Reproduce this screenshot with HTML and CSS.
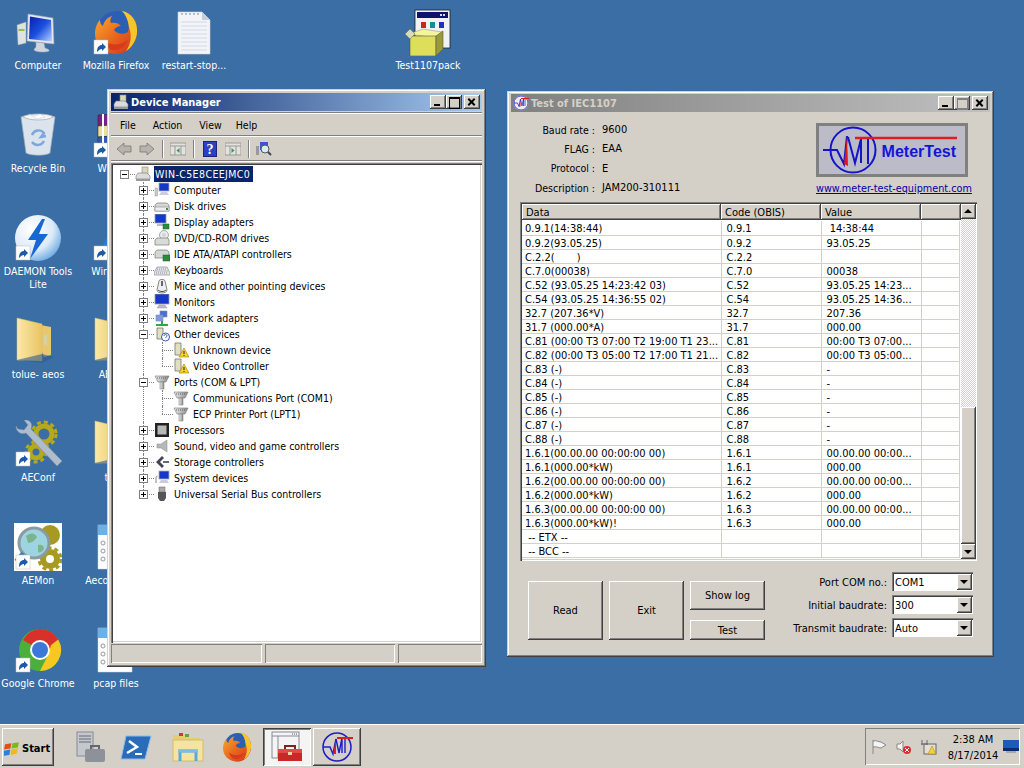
FILE: index.html
```html
<!DOCTYPE html>
<html lang="en">
<head>
    <meta charset="UTF-8">
    <title>Desktop</title>
    <link rel="stylesheet" href="styles.css">
</head>
<body>
    <!-- shared icon drawings -->
    <svg class="icon-defs" xmlns="http://www.w3.org/2000/svg">
        <defs>
            <linearGradient id="g-screen" x1="0" y1="0" x2="1" y2="1"><stop offset="0" stop-color="#0a1fa8"/><stop offset=".5" stop-color="#1a4fe0"/><stop offset="1" stop-color="#bcd4ff"/></linearGradient>
            <linearGradient id="g-fox" x1="0" y1="0" x2="1" y2="1"><stop offset="0" stop-color="#f9b233"/><stop offset=".55" stop-color="#e8641b"/><stop offset="1" stop-color="#c9301e"/></linearGradient>
            <linearGradient id="g-folder" x1="0" y1="0" x2="1" y2="0"><stop offset="0" stop-color="#fbe9a8"/><stop offset="1" stop-color="#e9c463"/></linearGradient>
            <radialGradient id="g-sphere" cx=".35" cy=".3" r=".8"><stop offset="0" stop-color="#fff"/><stop offset=".6" stop-color="#dceaf8"/><stop offset="1" stop-color="#5aa0dd"/></radialGradient>
            <linearGradient id="g-port" x1="0" y1="0" x2="1" y2="0"><stop offset="0" stop-color="#eee"/><stop offset="1" stop-color="#888"/></linearGradient>

            <g id="i-shortcut">
                <rect x="2" y="32" width="14" height="14" fill="#fff" stroke="#bbb" stroke-width=".5"/>
                <path d="M5 44c0-5 2-7 5-7v-2l4 4-4 4v-2c-2 0-3 1-5 3z" fill="#1c5aa8"/>
            </g>
            <g id="i-computer">
                <path d="M14 6l25 4 1 26-27-3z" fill="#e4e8ee" stroke="#9aa3ad" stroke-width=".6"/>
                <path d="M16 8.500l21 3.500 1 21.500-23-2.500z" fill="url(#g-screen)"/>
                <path d="M22 34l8 1 1 5c3 1 5 2 4 3-3 2-14 1-15-1 0-1 1-2 2-3z" fill="#cfd5dc" stroke="#9aa3ad" stroke-width=".5"/>
                <path d="M3 17l9-3v21l-8 2z" fill="#dfe3e0" stroke="#9aa3ad" stroke-width=".5"/>
                <rect x="4.500" y="21" width="6" height="2" fill="#8fc24f"/>
            </g>
            <g id="i-firefox">
                <circle cx="25" cy="23" r="20" fill="#2a5fb4"/>
                <path d="M30 3c10 2 16 11 15 22-1 12-10 21-21 21C12 46 3 37 3 26c0-6 2-11 5-14 0 3 1 5 3 6 1-5 5-9 9-10-2 3-2 5-1 7 4-1 8 0 10 3-3 0-6 2-7 4 3 4 9 5 14 2 2-7 0-15-6-21z" fill="url(#g-fox)"/>
                <path d="M30 3c10 2 16 11 15 22-1 8-5 14-11 18 5-7 6-16 3-24-1-7-3-12-7-16z" fill="#f7c42d"/>
                <path d="M12 32c6 6 16 6 24 0-3 7-9 11-16 10-4-1-7-5-8-10z" fill="#d83a1c"/>
            </g>
            <g id="i-doc">
                <path d="M8 4h24l8 8v34H8z" fill="#f2f4f8" stroke="#cfd4dc" stroke-width=".6"/>
                <path d="M32 4v8h8z" fill="#c8ced8"/>
                <path d="M11 14h26M11 18h26M11 22h26M11 26h26M11 30h26M11 34h26M11 38h26M11 42h26" stroke="#d2d8e4" stroke-width="1"/>
                <path d="M11 6h18" stroke="#a5adb8" stroke-width="1.500" stroke-dasharray="2 2"/>
            </g>
            <g id="i-package">
                <rect x="11" y="2" width="35" height="38" fill="#f2f2f4" stroke="#222" stroke-width=".8"/>
                <rect x="13" y="4" width="31" height="6" fill="#101070"/>
                <path d="M36 7h6" stroke="#ddd" stroke-width="2" stroke-dasharray="2 1"/>
                <rect x="17" y="14" width="5" height="6" fill="#d02020"/>
                <rect x="26" y="14" width="5" height="6" fill="#109090"/>
                <rect x="35" y="14" width="5" height="6" fill="#2030c0"/>
                <path d="M5 26l14-5 19 3-6 6z" fill="#f4f49a" stroke="#888" stroke-width=".5"/>
                <path d="M6 28h26v20H6z" fill="#dede5a" stroke="#555" stroke-width=".6"/>
                <path d="M32 28l7-5v18l-7 7z" fill="#9a9a38" stroke="#555" stroke-width=".6"/>
                <path d="M1 26l5-5 5 5-5 5z" fill="#d8dcb0" stroke="#666" stroke-width=".5"/>
            </g>
            <g id="i-recycle">
                <path d="M7 6c6-3 29-3 34 0l-5 36c-4 3-19 3-24 0z" fill="#dbe4ec" stroke="#9aa7b3" stroke-width=".7"/>
                <path d="M9 6c7 4 24 4 30 0-3-4-27-4-30 0z" fill="#f4f6f8" stroke="#a6b0ba" stroke-width=".8"/>
                <path d="M15 3l6 2 5-2 5 3-8 2z" fill="#fff" stroke="#b6bcc4" stroke-width=".4"/>
                <path d="M18 24a7 7 0 0 1 12-2l-3 4 5-1M30 30a7 7 0 0 1-12 1" fill="none" stroke="#7ca6dc" stroke-width="2.400"/>
            </g>
            <g id="i-winrar">
                <path d="M6 4l28-2v11l-28 2z" fill="#7a1f86" stroke="#222" stroke-width=".5"/>
                <path d="M6 15l28-2v11l-28 2z" fill="#e8dfa0" stroke="#222" stroke-width=".5"/>
                <path d="M6 26l28-2v10l-28 3z" fill="#3558b8" stroke="#222" stroke-width=".5"/>
                <path d="M11 3v33" stroke="#fff" stroke-width="2"/>
            </g>
            <g id="i-daemon">
                <circle cx="24" cy="24" r="23" fill="url(#g-sphere)"/>
                <path d="M28 5L14 26h8l-6 19 18-25h-9l6-15z" fill="#1668d2"/>
            </g>
            <g id="i-winblue">
                <path d="M8 46C10 24 24 6 38 2l6 4C30 12 20 28 18 46z" fill="#2a7ae0"/>
                <path d="M20 46c2-12 8-22 18-28l8 4c-8 6-14 14-16 24z" fill="#0f4fb0"/>
            </g>
            <g id="i-folder" transform="translate(-4 0)">
                <path d="M20 6l21 4v28l-7 2z" fill="#e6c871"/>
                <path d="M7 1l25 6v37L7 43z" fill="url(#g-folder)" stroke="#d8bc6c" stroke-width=".5"/>
                <path d="M7 43l25-6 12 3-12 6z" fill="#2e5c8e" opacity=".6"/>
                <rect x="34" y="18" width="3" height="10" rx="1" fill="#d8d0a8"/>
            </g>
            <g id="i-aeconf">
                <circle cx="30" cy="14" r="8" fill="none" stroke="#b8a81c" stroke-width="5"/>
                <circle cx="30" cy="14" r="12" fill="none" stroke="#b8a81c" stroke-width="3" stroke-dasharray="4 3"/>
                <circle cx="22" cy="32" r="6" fill="none" stroke="#b8a81c" stroke-width="5"/>
                <circle cx="22" cy="32" r="10" fill="none" stroke="#b8a81c" stroke-width="3" stroke-dasharray="4 3"/>
                <path d="M2 6c0 6 5 9 10 7l31 33 5-5-31-32c2-5-1-10-7-9l4 5-4 5-6-1z" fill="#aebccc" stroke="#7e90a4" stroke-width=".5"/>
            </g>
            <g id="i-aemon">
                <rect x="0" y="0" width="48" height="48" fill="#fff"/>
                <circle cx="36" cy="12" r="10" fill="#a89a20"/>
                <circle cx="36" cy="36" r="7" fill="none" stroke="#a89a20" stroke-width="6"/>
                <circle cx="36" cy="36" r="11" fill="none" stroke="#a89a20" stroke-width="3" stroke-dasharray="4 3"/>
                <circle cx="20" cy="20" r="15" fill="#9cd4e0" stroke="#8a9aa0" stroke-width="3"/>
                <path d="M12 13c5-4 9-3 11 1-2 3-5 6-9 6zM24 22c4-1 6 1 6 4-2 3-4 4-6 3z" fill="#7cb48c"/>
                <path d="M9 30L2 38" stroke="#3b7cc0" stroke-width="4"/>
            </g>
            <g id="i-doclist">
                <path d="M6 2h34v44H6z" fill="#fdfdfd" stroke="#d0d4d8" stroke-width=".5"/>
                <rect x="6" y="2" width="34" height="10" fill="#6cb0e8"/>
                <circle cx="11" cy="20" r="2" fill="none" stroke="#999"/>
                <circle cx="11" cy="28" r="2" fill="none" stroke="#999"/>
                <circle cx="11" cy="36" r="2" fill="none" stroke="#999"/>
            </g>
            <g id="i-chrome">
                <circle cx="26" cy="24" r="21" fill="#4caf3c"/>
                <path d="M26 3a21 21 0 0 1 18.200 10.500L44 24H26L9 14A21 21 0 0 1 26 3z" fill="#d8312a"/>
                <path d="M44.200 13.500A21 21 0 0 1 26 45l9-18 2-8z" fill="#f7c821"/>
                <circle cx="26" cy="24" r="10" fill="#fff"/>
                <circle cx="26" cy="24" r="8" fill="#3b78d8"/>
            </g>

            <g id="i-mt">
                <circle cx="16" cy="16" r="14" fill="none" stroke="#1c1cc8" stroke-width="1.500"/>
                <path d="M2 16h7l3 7 3-15" fill="none" stroke="#1c1cc8" stroke-width="1.500"/>
                <path d="M12 23l3-15v15" fill="#d82020"/>
                <path d="M15 8l3 14 3-15v15M24 8v14" fill="none" stroke="#1c1cc8" stroke-width="1.400"/>
                <path d="M16 7h16" stroke="#d82020" stroke-width="2"/>
            </g>

            <!-- tree, 16px -->
            <g id="t-host">
                <rect x="7" y="1" width="6" height="8" fill="#d8d8b8" stroke="#888" stroke-width=".6"/>
                <path d="M3 7l9 0 3 3v3H1v-3z" fill="#dcdcdc" stroke="#777" stroke-width=".6"/>
                <rect x="1" y="13" width="14" height="2" fill="#999"/>
            </g>
            <g id="t-computer">
                <rect x="5" y="1" width="10" height="8" fill="#1638c8" stroke="#aab" stroke-width=".8"/>
                <path d="M7 10h6l2 3H5z" fill="#ccd"/>
                <rect x="1" y="6" width="2.500" height="8" fill="#ccc" stroke="#888" stroke-width=".4"/>
            </g>
            <g id="t-disk">
                <path d="M1 8c0-2 2-3 3-3h8c1 0 3 1 3 3v5H1z" fill="#d4d8d4" stroke="#666" stroke-width=".6"/>
                <rect x="1" y="9" width="14" height="4" fill="#eef0ee" stroke="#777" stroke-width=".5"/>
                <rect x="12" y="10" width="2" height="2" fill="#2c9c3c"/>
            </g>
            <g id="t-display">
                <rect x="1" y="0" width="11" height="9" fill="#1638c8" stroke="#99a" stroke-width=".8"/>
                <path d="M3 10h7v2H3z" fill="#bbc"/>
                <rect x="9" y="10" width="6" height="5" fill="#2c8c3c" stroke="#1c5c2c" stroke-width=".5"/>
            </g>
            <g id="t-dvd">
                <circle cx="10" cy="5" r="4.500" fill="#e8ecf0" stroke="#777" stroke-width=".6"/>
                <circle cx="10" cy="5" r="1.200" fill="#fff" stroke="#777" stroke-width=".4"/>
                <path d="M1 10l2-2h11l1 2v5H1z" fill="#d8dcd8" stroke="#666" stroke-width=".6"/>
            </g>
            <g id="t-ide">
                <path d="M1 7c0-2 2-3 3-3h8c1 0 3 1 3 3v5H1z" fill="#d4d8d4" stroke="#666" stroke-width=".6"/>
                <rect x="9" y="9" width="7" height="6" fill="#2c8c3c" stroke="#1c5c2c" stroke-width=".5"/>
            </g>
            <g id="t-keyboard">
                <path d="M3 5h10l3 6v2H0v-2z" fill="#e4e6ea" stroke="#778" stroke-width=".6"/>
                <path d="M3 7h10M2.500 9h11M2 11h12" stroke="#889" stroke-dasharray="1 1"/>
            </g>
            <g id="t-mouse">
                <path d="M5 3c0-2 6-2 6 0l2 9c0 4-10 4-10 0z" fill="#eceef0" stroke="#555" stroke-width=".7"/>
                <path d="M7 3h2v5H7z" fill="#667"/>
                <path d="M4 12c2 2 6 2 8 0" fill="none" stroke="#445"/>
            </g>
            <g id="t-monitor">
                <rect x="1" y="0" width="14" height="10" fill="#1638c8" stroke="#99a" stroke-width=".8"/>
                <path d="M5 11h6l2 3H3z" fill="#bbc" stroke="#889" stroke-width=".4"/>
            </g>
            <g id="t-network">
                <rect x="6" y="1" width="7" height="6" fill="#4c6cd8" stroke="#88a" stroke-width=".6"/>
                <rect x="2" y="5" width="7" height="6" fill="#7c9ce0" stroke="#88a" stroke-width=".6"/>
                <path d="M8 11v3M2 15h12" stroke="#2ca84c" stroke-width="2"/>
            </g>
            <g id="t-other">
                <path d="M3 2h6v11H3z" fill="#e0e0c0" stroke="#666" stroke-width=".7"/>
                <circle cx="11.500" cy="11" r="4" fill="#fff" stroke="#3858a8"/>
                <path d="M10 10c0-2 3-2 3 0 0 1-1.500 1-1.500 2" fill="none" stroke="#3858a8"/>
            </g>
            <g id="t-warn">
                <path d="M2 1h6v12H2z" fill="#e0e0c0" stroke="#666" stroke-width=".7"/>
                <path d="M11 6l5 9H6z" fill="#f8d030" stroke="#a08010" stroke-width=".6"/>
                <path d="M11 9v3M11 13v1" stroke="#222"/>
            </g>
            <g id="t-port">
                <path d="M1 2h14l-3 6H4z" fill="url(#g-port)" stroke="#777" stroke-width=".6"/>
                <rect x="6" y="8" width="4" height="7" fill="url(#g-port)" stroke="#777" stroke-width=".5"/>
                <path d="M3 4h10" stroke="#666" stroke-dasharray="1 1"/>
            </g>
            <g id="t-cpu">
                <rect x="1" y="1" width="14" height="14" fill="#222"/>
                <rect x="3.500" y="3.500" width="9" height="9" fill="#b8b8b4"/>
            </g>
            <g id="t-sound">
                <path d="M3 6h4l6-4v12l-6-4H3z" fill="#b4b8b8" stroke="#888" stroke-width=".5"/>
            </g>
            <g id="t-storage">
                <path d="M8 2l-6 6 6 6 2-2-4-4 4-4z" fill="#445"/>
                <path d="M9 7h6v2H9z" fill="#667"/>
            </g>
            <g id="t-system">
                <rect x="5" y="1" width="10" height="8" fill="#1638c8" stroke="#aab" stroke-width=".8"/>
                <path d="M7 10h6l2 3H5z" fill="#ccd"/>
                <path d="M2 13V7l1.500-1" fill="none" stroke="#888"/>
            </g>
            <g id="t-usb">
                <rect x="5" y="1" width="6" height="5" fill="#aaa" stroke="#666" stroke-width=".5"/>
                <path d="M4 6h8v6l-2 3H6l-2-3z" fill="#555"/>
            </g>
        </defs>
    </svg>

    <div class="desktop">
        <div class="icon-grid">
            <div class="desk-icon"><svg viewBox="0 0 48 48"><use href="#i-computer"/></svg><span>Computer</span></div>
            <div class="desk-icon"><svg viewBox="0 0 48 48"><use href="#i-recycle"/></svg><span>Recycle Bin</span></div>
            <div class="desk-icon"><svg viewBox="0 0 48 48"><use href="#i-daemon"/><use href="#i-shortcut"/></svg><span>DAEMON Tools Lite</span></div>
            <div class="desk-icon"><svg viewBox="0 0 48 48"><use href="#i-folder"/></svg><span>tolue- aeos</span></div>
            <div class="desk-icon"><svg viewBox="0 0 48 48"><use href="#i-aeconf"/><use href="#i-shortcut"/></svg><span>AEConf</span></div>
            <div class="desk-icon"><svg viewBox="0 0 48 48"><use href="#i-aemon"/><use href="#i-shortcut"/></svg><span>AEMon</span></div>
            <div class="desk-icon"><svg viewBox="0 0 48 48"><use href="#i-chrome"/><use href="#i-shortcut"/></svg><span>Google Chrome</span></div>

            <div class="desk-icon"><svg viewBox="0 0 48 48"><use href="#i-firefox"/><use href="#i-shortcut"/></svg><span>Mozilla Firefox</span></div>
            <div class="desk-icon"><svg viewBox="0 0 48 48"><use href="#i-winrar"/><use href="#i-shortcut"/></svg><span>WinRAR</span></div>
            <div class="desk-icon"><svg viewBox="0 0 48 48"><use href="#i-winblue"/><use href="#i-shortcut"/></svg><span>WinPcap 4</span></div>
            <div class="desk-icon"><svg viewBox="0 0 48 48"><use href="#i-folder"/></svg><span>AE files</span></div>
            <div class="desk-icon"><svg viewBox="0 0 48 48"><use href="#i-folder"/></svg><span>tests</span></div>
            <div class="desk-icon"><svg viewBox="0 0 48 48"><use href="#i-doclist"/></svg><span>Aecon-config</span></div>
            <div class="desk-icon"><svg viewBox="0 0 48 48"><use href="#i-doclist"/></svg><span>pcap files</span></div>

            <div class="desk-icon"><svg viewBox="0 0 48 48"><use href="#i-doc"/></svg><span>restart-stop...</span></div>
            <div class="desk-icon pack"><svg viewBox="0 0 48 48"><use href="#i-package"/></svg><span>Test1107pack</span></div>
        </div>

        <!-- Device Manager -->
        <div class="window device-manager">
            <div class="title-bar active">
                <svg class="title-icon" viewBox="0 0 16 16"><use href="#t-host"/></svg>
                <span class="title-text">Device Manager</span>
                <div class="caption-btns">
                    <button class="caption-btn cap-min"></button>
                    <button class="caption-btn cap-max"></button>
                    <button class="caption-btn cap-close"></button>
                </div>
            </div>
            <div class="menu-bar"><span>File</span><span>Action</span><span>View</span><span class="menu-help">Help</span></div>
            <div class="tool-bar">
                <svg class="tool back" viewBox="0 0 16 16"><path d="M1 8l7-6v3h7v6H8v3z" fill="#b8b4ac" stroke="#777" stroke-width=".8"/></svg>
                <svg class="tool fwd" viewBox="0 0 16 16"><path d="M15 8L8 2v3H1v6h7v3z" fill="#b8b4ac" stroke="#777" stroke-width=".8"/></svg>
                <i class="tool-sep"></i>
                <svg class="tool panel" viewBox="0 0 16 16"><rect x="0" y="2" width="16" height="12" fill="#e4e2dc" stroke="#999"/><path d="M0 5h16M5 5v9M11 5v9" stroke="#999"/><path d="M9.500 7v5l-3-2.500z" fill="#2c9c5c"/></svg>
                <i class="tool-sep"></i>
                <svg class="tool help" viewBox="0 0 14 16"><rect x=".5" y=".5" width="13" height="15" fill="#2c40c0" stroke="#182878"/><text x="7" y="13" text-anchor="middle" class="help-mark">?</text></svg>
                <svg class="tool panel2" viewBox="0 0 16 16"><rect x="0" y="2" width="16" height="12" fill="#e4e2dc" stroke="#999"/><path d="M0 5h16M5 5v9M11 5v9" stroke="#999"/><path d="M6.500 7v5l3-2.500z" fill="#2c9c5c"/></svg>
                <i class="tool-sep"></i>
                <svg class="tool scan" viewBox="0 0 16 16"><rect x="0" y="5" width="3" height="9" fill="#999"/><rect x="4" y="1" width="8" height="8" fill="#3858c8"/><circle cx="9" cy="8" r="4" fill="#dce8f4" stroke="#555"/><path d="M12 11l3 3" stroke="#445" stroke-width="2"/></svg>
            </div>
            <div class="tree-view">
                <ul class="tree">
                    <li class="node root">
                        <div class="row"><i class="exp minus"></i><svg class="tree-icon" viewBox="0 0 16 16"><use href="#t-host"/></svg><span class="label selected">WIN-C5E8CEEJMC0</span></div>
                        <ul class="branch">
                            <li class="node"><div class="row"><i class="exp plus"></i><svg class="tree-icon" viewBox="0 0 16 16"><use href="#t-computer"/></svg><span class="label">Computer</span></div></li>
                            <li class="node"><div class="row"><i class="exp plus"></i><svg class="tree-icon" viewBox="0 0 16 16"><use href="#t-disk"/></svg><span class="label">Disk drives</span></div></li>
                            <li class="node"><div class="row"><i class="exp plus"></i><svg class="tree-icon" viewBox="0 0 16 16"><use href="#t-display"/></svg><span class="label">Display adapters</span></div></li>
                            <li class="node"><div class="row"><i class="exp plus"></i><svg class="tree-icon" viewBox="0 0 16 16"><use href="#t-dvd"/></svg><span class="label">DVD/CD-ROM drives</span></div></li>
                            <li class="node"><div class="row"><i class="exp plus"></i><svg class="tree-icon" viewBox="0 0 16 16"><use href="#t-ide"/></svg><span class="label">IDE ATA/ATAPI controllers</span></div></li>
                            <li class="node"><div class="row"><i class="exp plus"></i><svg class="tree-icon" viewBox="0 0 16 16"><use href="#t-keyboard"/></svg><span class="label">Keyboards</span></div></li>
                            <li class="node"><div class="row"><i class="exp plus"></i><svg class="tree-icon" viewBox="0 0 16 16"><use href="#t-mouse"/></svg><span class="label">Mice and other pointing devices</span></div></li>
                            <li class="node"><div class="row"><i class="exp plus"></i><svg class="tree-icon" viewBox="0 0 16 16"><use href="#t-monitor"/></svg><span class="label">Monitors</span></div></li>
                            <li class="node"><div class="row"><i class="exp plus"></i><svg class="tree-icon" viewBox="0 0 16 16"><use href="#t-network"/></svg><span class="label">Network adapters</span></div></li>
                            <li class="node">
                                <div class="row"><i class="exp minus"></i><svg class="tree-icon" viewBox="0 0 16 16"><use href="#t-other"/></svg><span class="label">Other devices</span></div>
                                <ul class="branch">
                                    <li class="node"><div class="row"><i class="exp none"></i><svg class="tree-icon" viewBox="0 0 16 16"><use href="#t-warn"/></svg><span class="label">Unknown device</span></div></li>
                                    <li class="node"><div class="row"><i class="exp none"></i><svg class="tree-icon" viewBox="0 0 16 16"><use href="#t-warn"/></svg><span class="label">Video Controller</span></div></li>
                                </ul>
                            </li>
                            <li class="node">
                                <div class="row"><i class="exp minus"></i><svg class="tree-icon" viewBox="0 0 16 16"><use href="#t-port"/></svg><span class="label">Ports (COM &amp; LPT)</span></div>
                                <ul class="branch">
                                    <li class="node"><div class="row"><i class="exp none"></i><svg class="tree-icon" viewBox="0 0 16 16"><use href="#t-port"/></svg><span class="label">Communications Port (COM1)</span></div></li>
                                    <li class="node"><div class="row"><i class="exp none"></i><svg class="tree-icon" viewBox="0 0 16 16"><use href="#t-port"/></svg><span class="label">ECP Printer Port (LPT1)</span></div></li>
                                </ul>
                            </li>
                            <li class="node"><div class="row"><i class="exp plus"></i><svg class="tree-icon" viewBox="0 0 16 16"><use href="#t-cpu"/></svg><span class="label">Processors</span></div></li>
                            <li class="node"><div class="row"><i class="exp plus"></i><svg class="tree-icon" viewBox="0 0 16 16"><use href="#t-sound"/></svg><span class="label">Sound, video and game controllers</span></div></li>
                            <li class="node"><div class="row"><i class="exp plus"></i><svg class="tree-icon" viewBox="0 0 16 16"><use href="#t-storage"/></svg><span class="label">Storage controllers</span></div></li>
                            <li class="node"><div class="row"><i class="exp plus"></i><svg class="tree-icon" viewBox="0 0 16 16"><use href="#t-system"/></svg><span class="label">System devices</span></div></li>
                            <li class="node"><div class="row"><i class="exp plus"></i><svg class="tree-icon" viewBox="0 0 16 16"><use href="#t-usb"/></svg><span class="label">Universal Serial Bus controllers</span></div></li>
                        </ul>
                    </li>
                </ul>
            </div>
            <div class="status-bar"><i class="pane pane-a"></i><i class="pane pane-b"></i><i class="pane pane-c"></i></div>
        </div>

        <!-- Test of IEC1107 -->
        <div class="window iec-test">
            <div class="title-bar inactive">
                <svg class="title-icon" viewBox="0 0 32 32"><circle cx="16" cy="16" r="15" fill="#eee"/><use href="#i-mt"/></svg>
                <span class="title-text">Test of IEC1107</span>
                <div class="caption-btns">
                    <button class="caption-btn cap-min"></button>
                    <button class="caption-btn cap-max off"></button>
                    <button class="caption-btn cap-close"></button>
                </div>
            </div>
            <div class="iec-body">
                <div class="iec-head">
                    <dl class="meter-info">
                        <dt>Baud rate :</dt><dd>9600</dd>
                        <dt>FLAG :</dt><dd>EAA</dd>
                        <dt>Protocol :</dt><dd>E</dd>
                        <dt>Description :</dt><dd>JAM200-310111</dd>
                    </dl>
                    <div class="brand">
                        <div class="logo">
                            <svg viewBox="0 0 146 48" class="logo-art">
                                <circle cx="34" cy="24" r="22.500" fill="none" stroke="#1414c8" stroke-width="2"/>
                                <path d="M4 24h14l7 14 3-28" fill="none" stroke="#1414c8" stroke-width="2"/>
                                <path d="M25 38l3-28 1 30z" fill="#d81c1c"/>
                                <path d="M29 11l7 26 6-24v24M49 13v25" fill="none" stroke="#1414c8" stroke-width="2"/>
                                <path d="M36 12h102" stroke="#e01c1c" stroke-width="2.500"/>
                            </svg>
                            <span class="logo-text">MeterTest</span>
                        </div>
                        <a class="site-link">www.meter-test-equipment.com</a>
                    </div>
                </div>

                <div class="data-frame">
                    <div class="data-view">
                        <div class="data-header"><span class="col-data">Data</span><span class="col-code">Code (OBIS)</span><span class="col-value">Value</span><span class="col-rest"></span></div>
                        <table class="data-table">
                            <tr><td>0.9.1(14:38:44)</td><td>0.9.1</td><td>&nbsp;14:38:44</td><td></td></tr>
                            <tr><td>0.9.2(93.05.25)</td><td>0.9.2</td><td>93.05.25</td><td></td></tr>
                            <tr><td>C.2.2(&nbsp;&nbsp;&nbsp;&nbsp;&nbsp;&nbsp;&nbsp;)</td><td>C.2.2</td><td></td><td></td></tr>
                            <tr><td>C.7.0(00038)</td><td>C.7.0</td><td>00038</td><td></td></tr>
                            <tr><td>C.52 (93.05.25 14:23:42 03)</td><td>C.52</td><td>93.05.25 14:23...</td><td></td></tr>
                            <tr><td>C.54 (93.05.25 14:36:55 02)</td><td>C.54</td><td>93.05.25 14:36...</td><td></td></tr>
                            <tr><td>32.7 (207.36*V)</td><td>32.7</td><td>207.36</td><td></td></tr>
                            <tr><td>31.7 (000.00*A)</td><td>31.7</td><td>000.00</td><td></td></tr>
                            <tr><td>C.81 (00:00 T3 07:00 T2 19:00 T1 23...</td><td>C.81</td><td>00:00 T3 07:00...</td><td></td></tr>
                            <tr><td>C.82 (00:00 T3 05:00 T2 17:00 T1 21...</td><td>C.82</td><td>00:00 T3 05:00...</td><td></td></tr>
                            <tr><td>C.83 (-)</td><td>C.83</td><td>-</td><td></td></tr>
                            <tr><td>C.84 (-)</td><td>C.84</td><td>-</td><td></td></tr>
                            <tr><td>C.85 (-)</td><td>C.85</td><td>-</td><td></td></tr>
                            <tr><td>C.86 (-)</td><td>C.86</td><td>-</td><td></td></tr>
                            <tr><td>C.87 (-)</td><td>C.87</td><td>-</td><td></td></tr>
                            <tr><td>C.88 (-)</td><td>C.88</td><td>-</td><td></td></tr>
                            <tr><td>1.6.1(00.00.00 00:00:00 00)</td><td>1.6.1</td><td>00.00.00 00:00...</td><td></td></tr>
                            <tr><td>1.6.1(000.00*kW)</td><td>1.6.1</td><td>000.00</td><td></td></tr>
                            <tr><td>1.6.2(00.00.00 00:00:00 00)</td><td>1.6.2</td><td>00.00.00 00:00...</td><td></td></tr>
                            <tr><td>1.6.2(000.00*kW)</td><td>1.6.2</td><td>000.00</td><td></td></tr>
                            <tr><td>1.6.3(00.00.00 00:00:00 00)</td><td>1.6.3</td><td>00.00.00 00:00...</td><td></td></tr>
                            <tr><td>1.6.3(000.00*kW)!</td><td>1.6.3</td><td>000.00</td><td></td></tr>
                            <tr><td>&nbsp;-- ETX --</td><td></td><td></td><td></td></tr>
                            <tr><td>&nbsp;-- BCC --</td><td></td><td></td><td></td></tr>
                        </table>
                    </div>
                    <div class="scroll-bar">
                        <button class="scroll-btn up"></button>
                        <div class="scroll-track"></div>
                        <div class="scroll-thumb"></div>
                        <button class="scroll-btn down"></button>
                    </div>
                </div>

                <div class="controls">
                    <button class="btn btn-big">Read</button>
                    <button class="btn btn-big">Exit</button>
                    <div class="btn-stack">
                        <button class="btn btn-log">Show log</button>
                        <button class="btn btn-test">Test</button>
                    </div>
                    <div class="port-form">
                        <label>Port COM no.:</label><div class="combo"><span>COM1</span><i class="combo-arrow"></i></div>
                        <label>Initial baudrate:</label><div class="combo"><span>300</span><i class="combo-arrow"></i></div>
                        <label>Transmit baudrate:</label><div class="combo"><span>Auto</span><i class="combo-arrow"></i></div>
                    </div>
                </div>
            </div>
        </div>
    </div>

    <!-- taskbar -->
    <div class="taskbar">
        <button class="start-btn">
            <svg viewBox="0 0 16 16"><path d="M1 4l6-1-1 5-6 1z" fill="#e0501c"/><path d="M8 3l6-1-1 5-6 1z" fill="#7cb81c"/><path d="M0 10l6-1-1 5-6 1z" fill="#2c80d8"/><path d="M7 9l6-1-1 5-6 1z" fill="#f0b81c"/></svg>
            <span>Start</span>
        </button>
        <div class="quick-launch">
            <svg viewBox="0 0 32 32"><rect x="3" y="1" width="16" height="24" fill="#c4c8cc" stroke="#889"/><path d="M5 5h12M5 8h12M5 11h12" stroke="#667"/><rect x="11" y="18" width="20" height="13" rx="2" fill="#8c9298"/><path d="M17 18v-3h8v3" fill="none" stroke="#667" stroke-width="2"/></svg>
            <svg viewBox="0 0 32 32"><path d="M6 5h25l-6 23H1z" fill="#2a6cb8" stroke="#8cbce8"/><path d="M9 10l8 6-10 6" fill="none" stroke="#fff" stroke-width="2.500"/><path d="M15 23h7" stroke="#fff" stroke-width="2"/></svg>
            <svg viewBox="0 0 32 32"><path d="M1 4h12l3 3h12v6H1z" fill="#e8cc70"/><rect x="7" y="2" width="4" height="3" fill="#c83c2c"/><rect x="13" y="3" width="4" height="3" fill="#5ca83c"/><rect x="1" y="9" width="30" height="21" fill="#f4e4a4" stroke="#d4bc6c"/><path d="M8 30V20h16v10" fill="none" stroke="#5ca8dc" stroke-width="3"/><path d="M6 20h20" stroke="#7cbce8" stroke-width="3"/></svg>
            <svg viewBox="0 0 48 48"><use href="#i-firefox"/></svg>
        </div>
        <button class="task-btn pressed">
            <svg viewBox="0 0 32 32"><rect x="1" y="1" width="27" height="26" fill="#f4f4f4" stroke="#889"/><path d="M1 5h27M7 5v22" stroke="#889"/><path d="M21 3h5" stroke="#556" stroke-dasharray="1 1"/><path d="M7 18h24v12H7z" fill="#c82828"/><path d="M7 18h24v4H7z" fill="#e04c4c"/><path d="M14 18v-3h10v3" fill="none" stroke="#802020" stroke-width="2"/><rect x="17" y="21" width="4" height="3" fill="#f0d0a0"/></svg>
        </button>
        <button class="task-btn">
            <svg viewBox="0 0 32 32"><use href="#i-mt"/></svg>
        </button>
        <div class="tray">
            <svg class="tray-flag" viewBox="0 0 16 16"><path d="M2 1v14M2 2c4-1 5 1 8 1l5 3-5 3c-3 0-4-2-8-1" fill="#f4f4f0" stroke="#888"/></svg>
            <svg class="tray-sound" viewBox="0 0 16 16"><path d="M1 5h3l3-3v11L4 10H1z" fill="#f4f4f0" stroke="#888"/><circle cx="11" cy="11" r="4" fill="#d83030"/><path d="M9 9l4 4M13 9l-4 4" stroke="#fff"/></svg>
            <svg class="tray-power" viewBox="0 0 16 16"><rect x="3" y="5" width="12" height="10" fill="#e4e0d0" stroke="#666"/><path d="M1 1v5M6 1v5M0 5h7" stroke="#667"/><path d="M11 7l4 8H7z" fill="#f8d030" stroke="#a08010" stroke-width=".5"/></svg>
            <div class="clock"><span>2:38 AM</span><span>8/17/2014</span></div>
            <svg class="tray-desktop" viewBox="0 0 16 14"><rect width="16" height="11" fill="#1c5cb8"/><rect y="8" width="16" height="3" fill="#0c2c68"/><rect x="3" y="11" width="10" height="2" fill="#a4a8b0"/></svg>
        </div>
    </div>
</body>
</html>
```

FILE: styles.css
```css
* {
    box-sizing: border-box;
}

html, body {
    margin: 0;
    height: 768px;
    overflow: hidden;
}

body {
    display: flex;
    flex-direction: column;
    width: 1024px;
    background: #3a6ea5;
    font-family: "DejaVu Sans Condensed", "DejaVu Sans", sans-serif;
    font-stretch: condensed;
    font-size: 10.5px;
    color: #000;
}

.icon-defs {
    width: 0;
    height: 0;
}

.desktop {
    position: relative;
    height: 724px;
    flex: none;
}

/* desktop icons */
.icon-grid {
    display: grid;
    grid-auto-flow: column;
    grid-template-rows: repeat(7, 103px);
    grid-auto-columns: 78px;
    margin-left: -1px;
    padding-top: 8px;
}

.desk-icon {
    display: flex;
    flex-direction: column;
    align-items: center;
    color: #fff;
    text-align: center;
    line-height: 13px;
}

.desk-icon svg {
    width: 48px;
    height: 48px;
    margin-bottom: 3px;
}

.pack {
    grid-column: 6;
    grid-row: 1;
}

/* windows */
.window {
    position: absolute;
    display: flex;
    flex-direction: column;
    padding: 4px;
    background: #d4d0c8;
    box-shadow: inset -1px -1px #404040, inset 1px 1px #d4d0c8, inset -2px -2px #808080, inset 2px 2px #fff;
}

.device-manager {
    left: 107px;
    top: 89px;
    width: 379px;
    height: 578px;
}

.iec-test {
    left: 507px;
    top: 91px;
    width: 487px;
    height: 566px;
    padding-top: 3px;
    font-size: 11px;
}

.title-bar {
    display: flex;
    align-items: center;
    height: 18px;
    flex: none;
    padding-left: 2px;
    font-size: 11px;
    font-weight: 700;
    color: #fff;
}

.title-bar.active {
    background: linear-gradient(90deg, #0a246a, #a6caf0);
}

.title-bar.inactive {
    background: linear-gradient(90deg, #808080, #c0c0c0);
    color: #d4d0c8;
}

.title-icon {
    width: 16px;
    height: 16px;
    margin-right: 2px;
}

.title-text {
    flex: 1;
}

.caption-btns {
    display: flex;
    padding-right: 2px;
}

.caption-btn {
    position: relative;
    width: 16px;
    height: 14px;
    padding: 0;
    border: none;
    background: #d4d0c8;
    box-shadow: inset -1px -1px #404040, inset 1px 1px #fff, inset -2px -2px #808080;
}

.cap-close {
    margin-left: 2px;
}

.cap-min::before {
    content: '';
    position: absolute;
    left: 4px;
    bottom: 3px;
    width: 6px;
    height: 2px;
    background: #000;
}

.cap-max::before {
    content: '';
    position: absolute;
    left: 3px;
    top: 2px;
    width: 9px;
    height: 9px;
    border: 1px solid #000;
    border-top-width: 2px;
}

.cap-max.off::before {
    border-color: #808080;
}

.cap-close::before,
.cap-close::after {
    content: '';
    position: absolute;
    left: 3px;
    top: 6px;
    width: 9px;
    height: 2px;
    background: #000;
}

.cap-close::before {
    transform: rotate(45deg);
}

.cap-close::after {
    transform: rotate(-45deg);
}

/* Device Manager */
.menu-bar {
    display: flex;
    gap: 17px;
    align-items: center;
    flex: none;
    height: 24px;
    margin-top: 1px;
    padding: 1px 0 0 9px;
    border-top: 1px solid #808080;
    border-bottom: 1px solid #808080;
    box-shadow: inset 0 1px #fff, 0 1px #fff;
}

.menu-help {
    margin-left: -3px;
}

.tool-bar {
    display: flex;
    align-items: center;
    flex: none;
    height: 24px;
    margin-top: 1px;
    padding-left: 5px;
    border-bottom: 1px solid #808080;
    box-shadow: 0 1px #fff;
}

.tool {
    width: 16px;
    height: 16px;
    flex: none;
}

.fwd {
    margin-left: 7px;
}

.tool-sep {
    width: 2px;
    height: 18px;
    margin: 0 6px 0 7px;
    border-left: 1px solid #808080;
    border-right: 1px solid #fff;
}

.help {
    width: 14px;
    margin-left: 2px;
}

.help-mark {
    fill: #fff;
    font-family: "Liberation Serif", serif;
    font-size: 14px;
    font-weight: 700;
}

.panel2 {
    margin-left: 8px;
}

.tree-view {
    flex: 1;
    min-height: 0;
    margin-top: 2px;
    padding: 3px 2px 0;
    background: #fff;
    box-shadow: inset 1px 1px #808080, inset 2px 2px #404040, inset -1px -1px #fff, inset -2px -2px #d4d0c8;
}

.tree,
.branch {
    margin: 0;
    padding: 0;
    list-style: none;
}

.branch {
    padding-left: 19px;
}

.node {
    position: relative;
}

.node::before {
    content: '';
    position: absolute;
    left: 11px;
    top: 0;
    bottom: 0;
    border-left: 1px dotted #808080;
}

.node:last-child::before {
    bottom: auto;
    height: 8px;
}

.root::before {
    content: none;
}

.row {
    position: relative;
    display: flex;
    align-items: center;
    height: 16px;
    padding-left: 7px;
    white-space: nowrap;
}

.row::before {
    content: '';
    position: absolute;
    left: 11px;
    top: 8px;
    width: 11px;
    border-top: 1px dotted #808080;
}

.exp {
    position: relative;
    width: 9px;
    height: 9px;
    margin-right: 6px;
    flex: none;
    border: 1px solid #808080;
    background-color: #fff;
    background-repeat: no-repeat;
}

.exp.plus {
    background-image: linear-gradient(#000, #000), linear-gradient(#000, #000);
    background-size: 5px 1px, 1px 5px;
    background-position: 1px 3px, 3px 1px;
}

.exp.minus {
    background-image: linear-gradient(#000, #000);
    background-size: 5px 1px;
    background-position: 1px 3px;
}

.exp.none {
    border: none;
    background: none;
}

.tree-icon {
    position: relative;
    width: 16px;
    height: 16px;
    margin-right: 3px;
    flex: none;
}

.label {
    height: 16px;
    padding: 0 1px;
    line-height: 16px;
}

.label.selected {
    width: 99px;
    letter-spacing: .4px;
    background: #0a246a;
    color: #fff;
}

.status-bar {
    display: flex;
    flex: none;
    gap: 3px;
    height: 19px;
    margin-top: 1px;
}

.pane {
    display: block;
    box-shadow: inset 1px 1px #808080, inset -1px -1px #fff;
}

.pane-a {
    width: 151px;
}

.pane-b {
    width: 130px;
}

.pane-c {
    width: 84px;
}

/* Test of IEC1107 */
.iec-body {
    flex: 1;
    min-height: 0;
    padding: 8px 0 0 9px;
}

.iec-head {
    display: flex;
    justify-content: space-between;
    height: 82px;
    padding-right: 18px;
}

.meter-info {
    display: grid;
    grid-template-columns: 75px auto;
    grid-auto-rows: 19.330px;
    column-gap: 7px;
    align-items: center;
    align-content: start;
    margin: 0;
}

.meter-info dt {
    font-size: 10.5px;
    text-align: right;
}

.meter-info dd {
    margin: 0;
}

.brand {
    display: flex;
    flex-direction: column;
    width: 156px;
    padding-top: 3px;
}

.logo {
    position: relative;
    display: flex;
    align-items: flex-end;
    justify-content: flex-end;
    width: 152px;
    height: 54px;
    padding: 0 9px 14px 0;
    border: 3px solid #808080;
    background: #bcbcc8;
}

.logo-art {
    position: absolute;
    left: 0;
    top: 0;
    width: 146px;
    height: 48px;
}

.logo-text {
    position: relative;
    color: #1414d8;
    font-family: "Liberation Sans", sans-serif;
    font-size: 16px;
    font-stretch: normal;
    font-weight: 700;
    line-height: 16px;
}

.site-link {
    margin-top: 5px;
    color: #0000a0;
    font-size: 10.750px;
    text-decoration: underline;
    white-space: nowrap;
}

.data-frame {
    display: flex;
    width: 457px;
    height: 359px;
    margin-top: 0;
    padding: 2px 1px 2px 2px;
    background: #fff;
    box-shadow: inset 1px 1px #808080, inset 2px 2px #404040, inset -1px -1px #fff, inset -2px -2px #d4d0c8;
}

.data-view {
    flex: 1;
    min-width: 0;
    overflow: hidden;
}

.data-header {
    display: flex;
    height: 16px;
    line-height: 17px;
}

.data-header span {
    display: block;
    padding-left: 4px;
    background: #d4d0c8;
    box-shadow: inset -1px -1px #404040, inset 1px 1px #fff, inset -2px -2px #808080;
}

.col-data {
    width: 199px;
}

.col-code,
.col-value {
    width: 100px;
}

.col-code,
.col-value {
    padding-left: 5px;
}

.col-rest {
    flex: 1;
}

.data-table {
    width: 438px;
    margin-top: 1px;
    border-collapse: collapse;
    table-layout: fixed;
}

.data-table td {
    height: 14px;
    padding: 2px 0 0 5px;
    border-right: 1px solid #d4d0c8;
    border-bottom: 1px solid #d4d0c8;
    line-height: 11px;
    white-space: nowrap;
}

.data-table td:nth-child(1) {
    width: 199px;
    padding-left: 3px;
}

.data-table td:nth-child(2),
.data-table td:nth-child(3) {
    width: 100px;
}

.scroll-bar {
    display: flex;
    flex-direction: column;
    width: 15px;
    flex: none;
}

.scroll-btn {
    position: relative;
    width: 15px;
    height: 15px;
    flex: none;
    padding: 0;
    border: none;
    background: #d4d0c8;
    box-shadow: inset -1px -1px #404040, inset 1px 1px #fff, inset -2px -2px #808080;
}

.scroll-btn::before {
    content: '';
    position: absolute;
    left: 3px;
    border-left: 4px solid transparent;
    border-right: 4px solid transparent;
}

.scroll-btn.up::before {
    top: 5px;
    border-bottom: 4px solid #000;
}

.scroll-btn.down::before {
    top: 6px;
    border-top: 4px solid #000;
}

.scroll-track {
    flex: 1;
    background: repeating-conic-gradient(#d4d0c8 0 25%, #fff 0 50%) 0 0 / 2px 2px;
}

.scroll-thumb {
    height: 137px;
    flex: none;
    background: #d4d0c8;
    box-shadow: inset -1px -1px #404040, inset 1px 1px #fff, inset -2px -2px #808080;
}

.controls {
    display: flex;
    align-items: flex-start;
    padding: 11px 17px 0 8px;
}

.btn {
    display: block;
    padding: 0;
    border: none;
    background: #d4d0c8;
    font: inherit;
    color: #000;
    box-shadow: inset -1px -1px #404040, inset 1px 1px #fff, inset -2px -2px #808080;
}

.btn-big {
    width: 75px;
    height: 59px;
    margin: 9px 6px 0 0;
}

.btn-stack {
    display: flex;
    flex-direction: column;
    gap: 10px;
    width: 75px;
    margin-top: 9px;
}

.btn-log {
    height: 29px;
}

.btn-test {
    height: 20px;
}

.port-form {
    display: grid;
    grid-template-columns: auto 81px;
    grid-auto-rows: 19px;
    column-gap: 5px;
    row-gap: 4px;
    align-items: center;
    margin-left: auto;
}

.port-form label {
    padding-top: 2px;
    text-align: right;
}

.combo {
    position: relative;
    display: flex;
    align-items: center;
    height: 19px;
    padding: 2px 0 0 3px;
    background: #fff;
    box-shadow: inset 1px 1px #808080, inset 2px 2px #404040, inset -1px -1px #fff;
}

.combo-arrow {
    position: absolute;
    right: 1px;
    top: 2px;
    width: 15px;
    height: 16px;
    background: #d4d0c8;
    box-shadow: inset -1px -1px #404040, inset 1px 1px #fff, inset -2px -2px #808080;
}

.combo-arrow::before {
    content: '';
    position: absolute;
    left: 3px;
    top: 6px;
    border-left: 4px solid transparent;
    border-right: 4px solid transparent;
    border-top: 4px solid #000;
}

/* taskbar */
.taskbar {
    display: flex;
    align-items: flex-start;
    flex: none;
    height: 44px;
    padding: 3px 4px 0 2px;
    border-top: 1px solid #fff;
    background: #d4d0c8;
}

.start-btn {
    display: flex;
    align-items: center;
    gap: 1px;
    width: 52px;
    height: 38px;
    padding: 2px 0 0 2px;
    border: none;
    background: #d4d0c8;
    font: 700 11px "DejaVu Sans Condensed", "DejaVu Sans", sans-serif;
    font-stretch: condensed;
    color: #000;
    box-shadow: inset -1px -1px #404040, inset 1px 1px #fff, inset -2px -2px #808080;
}

.start-btn svg {
    width: 17px;
    height: 17px;
}

.quick-launch {
    display: grid;
    grid-template-columns: 44px 48px 56px 42px;
    justify-items: center;
    align-items: center;
    height: 38px;
    margin-left: 14px;
}

.quick-launch svg {
    width: 32px;
    height: 32px;
}

.task-btn {
    display: flex;
    align-items: center;
    justify-content: center;
    width: 48px;
    height: 38px;
    margin-right: 2px;
    padding: 0;
    border: none;
    background: #d4d0c8;
    box-shadow: inset -1px -1px #404040, inset 1px 1px #fff, inset -2px -2px #808080;
}

.task-btn svg {
    width: 32px;
    height: 32px;
}

.task-btn.pressed {
    margin-left: 5px;
    background: #f4f4f2;
    box-shadow: inset 1px 1px #404040, inset -1px -1px #fff, inset 2px 2px #808080;
}

.tray {
    display: flex;
    align-items: center;
    width: 155px;
    height: 37px;
    margin-left: auto;
    padding: 0 0 0 6px;
    box-shadow: inset 1px 1px #808080, inset -1px -1px #fff;
}

.tray svg {
    width: 16px;
    height: 16px;
    flex: none;
}

.tray-sound,
.tray-power {
    margin-left: 9px;
}

.clock {
    display: flex;
    flex-direction: column;
    align-items: center;
    flex: 1;
    padding: 2px 0 0 6px;
    font-size: 11px;
    line-height: 16px;
}

.tray svg.tray-desktop {
    margin-right: 1px;
}
```
